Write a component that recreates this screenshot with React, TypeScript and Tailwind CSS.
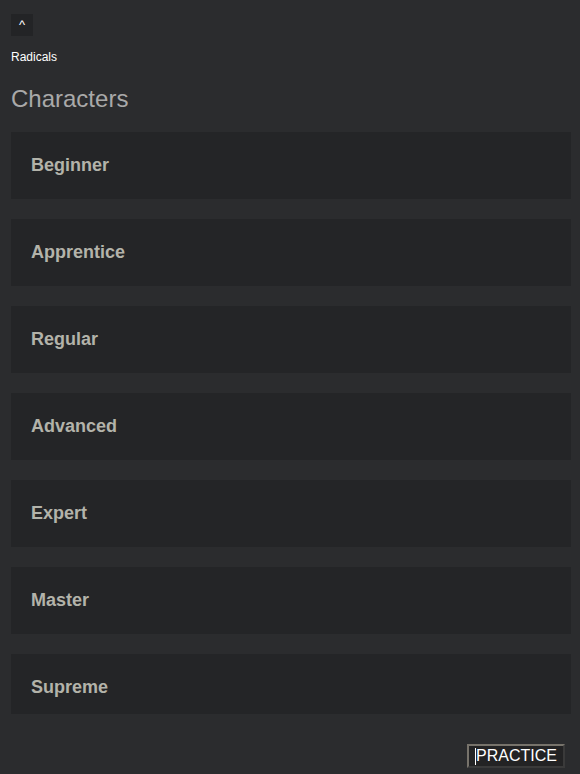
import React from 'react';

const levels = ['Beginner', 'Apprentice', 'Regular', 'Advanced', 'Expert', 'Master', 'Supreme'];

const App: React.FC = () => {
  return (
    <div className="min-h-[774px] bg-[#2b2c2e] pl-[11px] pr-[9px] pt-[14px] font-['Liberation_Sans',Arial,sans-serif]">
      <button className="flex h-[22px] w-[22px] items-center justify-center bg-[#232426] text-[13px] text-white">
        ^
      </button>
      <div className="mt-[14px] text-[12px] leading-[14px] text-white">Radicals</div>
      <h2 className="mt-[21px] text-[24px] leading-[28px] text-[#a9a9a9]">Characters</h2>
      <div className="mt-[19px] flex flex-col gap-5">
        {levels.map((name, i) => (
          <div
            key={name}
            className={`overflow-hidden bg-[#242527] ${i === levels.length - 1 ? 'h-[60px]' : 'h-[67px]'}`}
          >
            <div className="flex h-[67px] items-center px-5 text-[18px] font-bold text-[#b3b3aa]">{name}</div>
          </div>
        ))}
      </div>
      <div className="mt-[30px] flex justify-end pr-[6px]">
        <button className="flex h-[24px] items-center border-2 border-t-[#77736b] border-l-[#77736b] border-r-[#3a3a3a] border-b-[#3a3a3a] bg-[#232324] pl-[6px] pr-[6px] text-[16px] leading-none text-white">
          <span className="inline-block h-[17px] w-px bg-white" />
          PRACTICE
        </button>
      </div>
    </div>
  );
};

export default App;
